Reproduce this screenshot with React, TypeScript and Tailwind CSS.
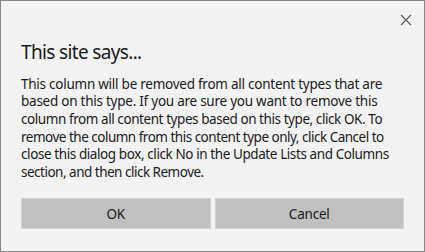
import React from "react";

const lines: [string, string][] = [
  ["This column will be removed from all content types that are", "tracking-[-0.25px]"],
  ["based on this type. If you are sure you want to remove this", "tracking-[-0.25px]"],
  ["column from all content types based on this type, click OK. To", "tracking-[-0.43px]"],
  ["remove the column from this content type only, click Cancel to", "tracking-[-0.5px]"],
  ["close this dialog box, click No in the Update Lists and Columns", "tracking-[-0.41px]"],
  ["section, and then click Remove.", "tracking-[-0.5px]"],
];

export default function App() {
  return (
    <div
      className="w-[425px] h-[252px] bg-[#f2f2f2] border border-[#868686] flex flex-col text-[#1a1a1a]"
      style={{ fontFamily: '"Noto Sans", "Open Sans", sans-serif' }}
    >
      <div className="flex justify-end pt-[13px] pr-[12px] h-[38px]">
        <svg width="12" height="12" viewBox="0 0 12 12" className="text-[#555]">
          <path d="M1 1 L11 11 M11 1 L1 11" stroke="currentColor" strokeWidth="1.1" fill="none" />
        </svg>
      </div>
      <div className="pl-[20px] text-[19px] leading-[26px] tracking-[-0.65px]">This site says...</div>
      <div className="pl-[20px] pt-[10.5px] text-[13.5px] leading-[17.7px]">
        {lines.map(([l, t]) => (
          <div key={l} className={"whitespace-nowrap " + t}>{l}</div>
        ))}
      </div>
      <div className="flex gap-[4px] pl-[20px] pr-[20px] mt-[16.5px]">
        <button className="flex-1 h-[31px] bg-[#c0c0c0] border border-[#d4d4d4] text-[13.5px] tracking-[-0.2px]">OK</button>
        <button className="flex-1 h-[31px] bg-[#c0c0c0] border border-[#d4d4d4] text-[13.5px] tracking-[-0.2px]">Cancel</button>
      </div>
    </div>
  );
}
